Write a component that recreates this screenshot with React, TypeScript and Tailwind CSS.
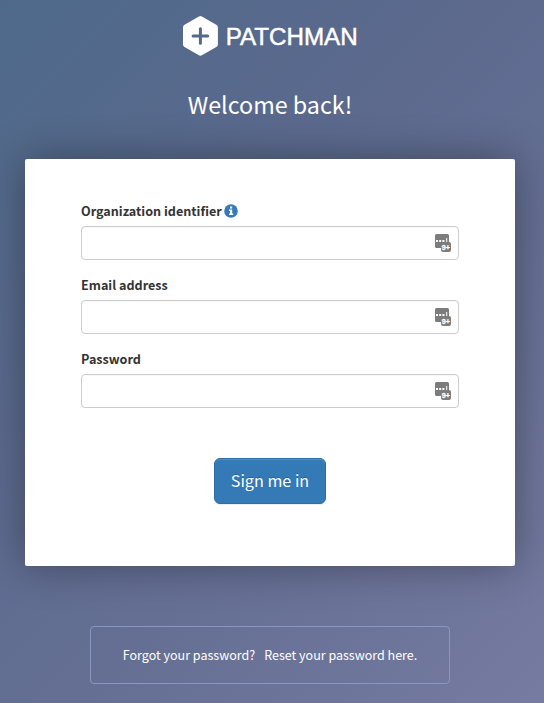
import React from 'react';

function Logo() {
  return (
    <svg width="180" height="42" viewBox="-2 0 180 42" role="img" aria-label="Patchman" className="block">
      <path
        d="M16.9 1.5 Q18.4 .7 19.9 1.5 L34.3 9.7 Q35.9 10.6 35.9 12.4 L35.9 29.4 Q35.9 31.1 34.3 32 L19.9 40.3 Q18.4 41.1 16.9 40.3 L2.5 32 Q1 31.1 1 29.4 L1 12.4 Q1 10.6 2.5 9.7 Z"
        fill="#fff"
      />
      <path d="M18.4 13.7 V28.3 M11.1 21 H25.7" stroke="#566889" strokeWidth="3" strokeLinecap="round" />
      <text
        x="43.7"
        y="30"
        fill="#fff"
        stroke="#fff"
        strokeWidth="0.5"
        fontSize="24.5"
        fontFamily="'Liberation Sans', sans-serif"
        textLength="132"
        lengthAdjust="spacingAndGlyphs"
      >
        PATCHMAN
      </text>
    </svg>
  );
}

function InfoIcon() {
  return (
    <svg width="14" height="14" viewBox="0 0 14 14" className="block">
      <circle cx="7" cy="7" r="6.8" fill="#337ab7" />
      <path d="M6 2.6h2.2v1.8H6zM5 5.5h3.2v4h1v1.4H5V9.5h1V6.9H5z" fill="#fff" />
    </svg>
  );
}

function ManagerIcon() {
  return (
    <svg width="17" height="19" viewBox="0 0 17 19" className="block">
      <rect x="1" y="0" width="14" height="14" rx="1.5" fill="#7c7c7c" />
      <path d="M2 6h2v2H2zM5.2 6h2v2h-2zM8.4 6h2v2h-2zM12.2 4h1v5h-1z" fill="#fff" />
      <rect x="7" y="8" width="10" height="10" rx="2" fill="#7c7c7c" />
      <text
        x="7.8"
        y="15.5"
        fill="#fff"
        stroke="#fff"
        strokeWidth="0.3"
        fontSize="7"
        fontWeight="700"
        fontFamily="'Liberation Sans', sans-serif"
        textLength="8.2"
        lengthAdjust="spacingAndGlyphs"
      >
        9+
      </text>
    </svg>
  );
}

function Field({ label, type, info }: { label: string; type: string; info?: boolean }) {
  return (
    <div className="mb-[15px]">
      <label className="mb-[5px] flex h-5 items-center gap-[2px] whitespace-nowrap text-[12.6px] leading-5 font-bold text-[#333]">
        <span>{label}</span>
        {info && <InfoIcon />}
      </label>
      <div className="flex h-[34px] items-center rounded-[4px] border border-[#ccc] bg-white pr-[7px] pl-3 shadow-[inset_0_1px_1px_rgba(0,0,0,0.03)]">
        <input type={type} aria-label={label} className="min-w-0 flex-1 bg-transparent outline-none" />
        <ManagerIcon />
      </div>
    </div>
  );
}

export default function App() {
  return (
    <div className="flex h-[703px] w-[544px] flex-col overflow-hidden bg-[linear-gradient(135deg,#4e6a8a_0%,#5b698d_35%,#687196_70%,#767ba1_100%)] pr-[4px] font-['Noto_Sans_CJK_SC',sans-serif]">
      <header className="flex flex-col items-center pt-[15px]">
        <Logo />
        <h1 className="mt-[29px] h-9 text-[23.3px] leading-9 font-normal whitespace-nowrap text-white">Welcome back!</h1>
      </header>
      <main className="mx-[25px] mt-[37px] h-[407px] w-[490px] shrink-0 rounded-[2px] bg-white px-14 pt-[42px] shadow-[0_0_40px_rgba(0,0,0,0.35)]">
        <Field label="Organization identifier" type="text" info />
        <Field label="Email address" type="email" />
        <Field label="Password" type="password" />
        <div className="mt-[50px] flex justify-center">
          <button className="h-[46px] w-28 rounded-[6px] border border-[#2e6da4] bg-[#337ab7] pb-[2px] text-[16.15px] leading-6 whitespace-nowrap text-white shadow-[inset_0_1px_0_rgba(255,255,255,0.15),0_1px_1px_rgba(0,0,0,0.075)] [text-shadow:0_-1px_0_rgba(0,0,0,0.2)]">
            Sign me in
          </button>
        </div>
      </main>
      <footer className="mx-auto mt-[60px] flex h-[58px] w-[360px] shrink-0 items-center justify-center gap-[9px] rounded-[4px] border border-[#8998c2] text-[12.53px] whitespace-nowrap text-white">
        <span>Forgot your password?</span>
        <a>Reset your password here.</a>
      </footer>
    </div>
  );
}
